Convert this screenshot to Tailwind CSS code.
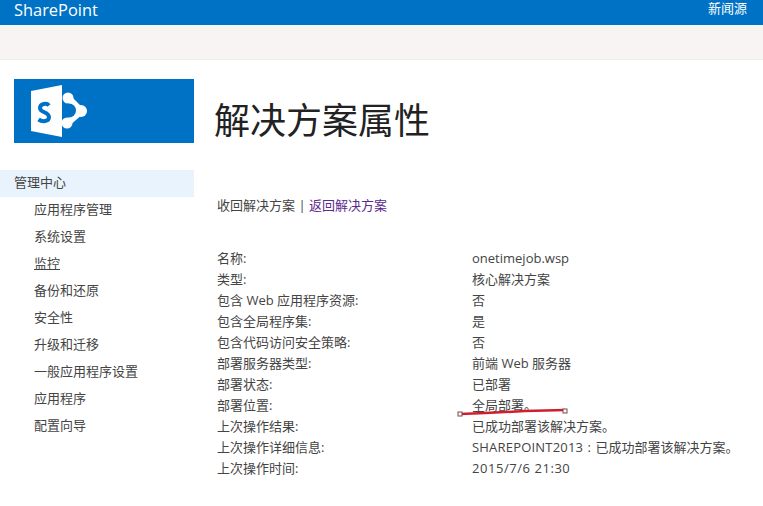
<!DOCTYPE html>
<html lang="zh">
<head>
<meta charset="utf-8">
<script src="https://cdn.jsdelivr.net/npm/@tailwindcss/browser@4"></script>
</head>
<body class="w-[763px] h-[506px] overflow-hidden bg-white text-[#444] font-['Open_Sans','Noto_Sans_CJK_SC',sans-serif]">
<header class="h-[25px] bg-[#0072c6] flex items-start justify-between pl-[14px] pr-[16px] text-white">
  <span class="text-[16.4px] leading-[20px]">SharePoint</span>
  <span class="text-[13px] leading-[17px]">新闻源</span>
</header>
<div class="h-[35px] bg-[#f9f4f4] border-b border-[#f0eded]"></div>
<div class="flex">
  <aside class="w-[194px] shrink-0 pt-[19px]">
    <div class="ml-[14px] h-[64px] bg-[#0072c6] flex items-center pl-[15px]">
      <svg width="58" height="54" viewBox="0 0 58 54">
        <path d="M2 7 L33 1 V53 L2 47 Z" fill="#fff"/>
        <path d="M39 14 L52 27 L38 39" fill="none" stroke="#fff" stroke-width="7"/>
        <circle cx="39" cy="14" r="5.5" fill="#fff"/>
        <circle cx="38" cy="39" r="5.5" fill="#fff"/>
        <circle cx="52" cy="27" r="6" fill="#fff"/>
        <circle cx="40" cy="26.5" r="7" fill="#0072c6"/>
        <path d="M20 21.5 C18 19 11 19 11 24 C11 29 20 27.500 20 33 C20 38 13 38 9.500 35.500" fill="none" stroke="#0072c6" stroke-width="4"/>
      </svg>
    </div>
    <nav class="mt-[27px] text-[13px] leading-[25px]">
      <div class="h-[27px] bg-[#e8f3fd] pl-[14px]">管理中心</div>
      <ul class="pl-[34px]">
        <li class="h-[27px]">应用程序管理</li>
        <li class="h-[27px]">系统设置</li>
        <li class="h-[27px] underline">监控</li>
        <li class="h-[27px]">备份和还原</li>
        <li class="h-[27px]">安全性</li>
        <li class="h-[27px]">升级和迁移</li>
        <li class="h-[27px]">一般应用程序设置</li>
        <li class="h-[27px]">应用程序</li>
        <li class="h-[27px]">配置向导</li>
      </ul>
    </nav>
  </aside>
  <main class="flex-1 pl-[20px]">
    <h1 class="mt-[33px] h-[56px] text-[36px] leading-[56px] font-normal text-[#222]">解决方案属性</h1>
    <div class="ml-[3px] mt-[47px] text-[13px] leading-[18px]">收回解决方案 | <span class="text-[#5b2a8c]">返回解决方案</span></div>
    <dl class="ml-[3px] mt-[34px] grid grid-cols-[255px_1fr] auto-rows-[21px] text-[13px] leading-[21px] text-[#444] relative">
      <dt>名称:</dt><dd>onetimejob.wsp</dd>
      <dt>类型:</dt><dd>核心解决方案</dd>
      <dt>包含 Web 应用程序资源:</dt><dd>否</dd>
      <dt>包含全局程序集:</dt><dd>是</dd>
      <dt>包含代码访问安全策略:</dt><dd>否</dd>
      <dt>部署服务器类型:</dt><dd>前端 Web 服务器</dd>
      <dt>部署状态:</dt><dd>已部署</dd>
      <dt>部署位置:</dt><dd>全局部署。</dd>
      <dt>上次操作结果:</dt><dd>已成功部署该解决方案。</dd>
      <dt>上次操作详细信息:</dt><dd class="whitespace-nowrap"><span class="tracking-[0.2px]">SHAREPOINT2013</span><span class="mx-[1px]"> : </span>已成功部署该解决方案。</dd>
      <dt>上次操作时间:</dt><dd class="tracking-[0.55px]">2015/7/6 21:30</dd>
      <svg class="absolute left-[240px] top-[160px]" width="112" height="10" viewBox="0 0 112 10">
        <path d="M3 6 C30 5 50 4 68 3 L108 2" fill="none" stroke="#cf1f2e" stroke-width="2.5"/>
        <rect x="1" y="4" width="4" height="4" fill="#fff" stroke="#7a4a4a"/>
        <rect x="106" y="1" width="4" height="4" fill="#fff" stroke="#7a4a4a"/>
      </svg>
    </dl>
  </main>
</div>
</body>
</html>
